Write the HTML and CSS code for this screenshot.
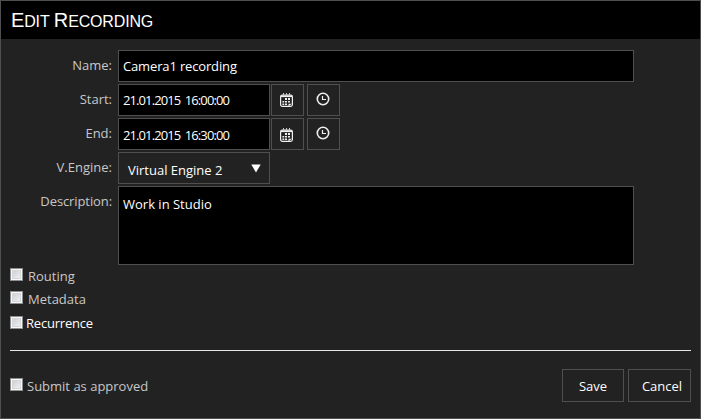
FILE: index.html
```html
<!DOCTYPE html>
<html lang="en">
  <head>
    <meta charset="UTF-8" />
    <title>Edit Recording</title>
    <link rel="stylesheet" href="styles.css">
  </head>
  <body>
    <!-- Shared icons -->
    <svg class="icon-defs" width="0" height="0">
      <symbol id="icon-calendar" viewBox="0 0 13 14">
        <rect x=".6" y="2" width="11.8" height="11.3" rx="1.8" fill="none" stroke="#f0f0f0" stroke-width="1.2" />
        <path d="M1 3.2h11" stroke="#f0f0f0" stroke-width="1.8" />
        <path d="M3.5 0v2.5M6.5 0v2.5M9.5 0v2.5" stroke="#c8c8c8" stroke-width="1" />
        <path d="M5 5h2v2H5zM8 5h2v2H8zM2.4 8h1.8v1.6H2.4zM5 8h2v1.6H5zM8 8h2v1.6H8zM2.4 10.5h1.8v1.6H2.4zM5 10.5h2v1.6H5z" fill="#f0f0f0" />
        <path d="M8.5 13.3v-2.6H12z" fill="#f0f0f0" />
      </symbol>
      <symbol id="icon-clock" viewBox="0 0 14 14">
        <circle cx="7" cy="7" r="5.7" fill="none" stroke="#eee" stroke-width="1.6" />
        <path d="M6.5 4v3.5H10" fill="none" stroke="#eee" stroke-width="1.2" />
      </symbol>
    </svg>

    <form class="dialog">
      <h1 class="dialog-title"><span>Edit</span> <span>Recording</span></h1>

      <div class="fields">
        <div class="row">
          <label for="name">Name:</label>
          <input class="text-input wide name" id="name" type="text" value="Camera1 recording">
        </div>
        <div class="row">
          <label for="start">Start:</label>
          <input class="text-input date" id="start" type="text" value="21.01.2015 16:00:00">
          <button class="icon-button" type="button"><svg><use href="#icon-calendar" /></svg></button>
          <button class="icon-button clock" type="button"><svg><use href="#icon-clock" /></svg></button>
        </div>
        <div class="row end">
          <label for="end">End:</label>
          <input class="text-input date" id="end" type="text" value="21.01.2015 16:30:00">
          <button class="icon-button" type="button"><svg><use href="#icon-calendar" /></svg></button>
          <button class="icon-button clock" type="button"><svg><use href="#icon-clock" /></svg></button>
        </div>
        <div class="row">
          <label>V.Engine:</label>
          <div class="select">
            <span>Virtual Engine 2</span>
            <svg class="arrow" width="10" height="9"><path d="M.3.5h9.4L5 8.5z" fill="#fff" /></svg>
          </div>
        </div>
        <div class="row">
          <label class="description" for="description">Description:</label>
          <textarea class="text-input wide" id="description">Work in Studio</textarea>
        </div>
      </div>

      <div class="options">
        <label class="option routing"><input type="checkbox"><span>Routing</span></label>
        <label class="option metadata"><input type="checkbox"><span>Metadata</span></label>
        <label class="option recurrence"><input type="checkbox"><span>Recurrence</span></label>
      </div>

      <div class="footer">
        <label class="option submit"><input type="checkbox"><span>Submit as approved</span></label>
        <button class="button save" type="button">Save</button>
        <button class="button cancel" type="button">Cancel</button>
      </div>
    </form>
  </body>
</html>
```
FILE: styles.css
```css
* {
  margin: 0;
  padding: 0;
  box-sizing: border-box;
}

body {
  background: #222;
  font-family: "Open Sans", "Noto Sans", sans-serif;
  font-size: 13px;
  color: #fff;
}

.icon-defs {
  display: none;
}

.dialog {
  width: 701px;
  height: 419px;
  border: 1px solid #4f4f4f;
  background: #222;
}

/* Small caps, a bit taller than the font-variant ones */
.dialog-title {
  height: 38px;
  padding-left: 10px;
  background: #000;
  font: 16px/38px "Liberation Sans", Arial, sans-serif;
  letter-spacing: -0.15px;
  text-transform: uppercase;
}

.dialog-title span {
  display: inline-block;
}

.dialog-title span::first-letter {
  font-size: 20px;
}

/* Form rows */
.fields {
  display: flex;
  flex-direction: column;
  gap: 2px;
  padding-top: 11px;
}

.row {
  display: flex;
}

.row label {
  width: 111px;
  height: 32px;
  margin-right: 6px;
  line-height: 30px;
  text-align: right;
  color: #c8c8c8;
}

.text-input {
  height: 32px;
  padding: 0 4px 1px;
  border: 1px solid #4f4f4f;
  background: #000;
  color: #fff;
  font: inherit;
  outline: none;
}

.wide {
  width: 516px;
}

.name {
  letter-spacing: -0.15px;
}

.date {
  width: 152px;
  letter-spacing: -0.9px;
  word-spacing: 2px;
}

.end .date {
  padding: 1px 4px 0;
}

.row .description {
  letter-spacing: -0.1px;
}

textarea.text-input {
  height: 79px;
  padding-top: 8px;
  line-height: 18px;
  resize: none;
}

.icon-button {
  display: flex;
  width: 33px;
  height: 32px;
  margin-left: 1px;
  padding: 8px 0 0 8px;
  border: 1px solid #4f4f4f;
  background: #222;
}

.end .icon-button:not(.clock) {
  padding-top: 9px;
}

.icon-button svg {
  width: 13px;
  height: 14px;
}

.icon-button.clock {
  margin-left: 3px;
  padding-top: 7px;
}

.icon-button.clock svg {
  width: 14px;
}

.select {
  display: flex;
  justify-content: space-between;
  width: 152px;
  height: 32px;
  padding: 0 8px 0 9px;
  border: 1px solid #4f4f4f;
  line-height: 34px;
}

.select .arrow {
  margin-top: 11px;
}

/* Checkboxes */
.options {
  display: flex;
  flex-direction: column;
  margin: 3px 9px 0;
  height: 83px;
  border-bottom: 1px solid #e6e6e6;
}

.option {
  display: flex;
  height: 13px;
  line-height: 17px;
  color: #c8c8c8;
}

.option input {
  appearance: none;
  width: 13px;
  height: 13px;
  border: 1px solid #8e8f8f;
  background: linear-gradient(135deg, #c4c8d0, #f8f8f8);
  box-shadow: inset 0 0 0 1px #f8f8f8, inset 0 0 0 2px #d4d6da;
}

.option span {
  margin-left: 5px;
}

.metadata {
  margin-top: 10px;
}

.option.recurrence {
  margin-top: 12px;
  line-height: 15px;
  letter-spacing: -0.2px;
  color: #fff;
}

.option.recurrence span {
  margin-left: 3px;
}

.option.submit span {
  margin-left: 4px;
}

/* Footer */
.footer {
  display: flex;
  margin: 18px 9px 0;
}

.submit {
  margin: 9px auto 0 0;
}

.button {
  width: 62px;
  height: 33px;
  border: 1px solid #4f4f4f;
  background: #222;
  color: #fff;
  font: inherit;
}

.button.cancel {
  width: 63px;
  margin-left: 4px;
  padding-left: 5px;
}
```
